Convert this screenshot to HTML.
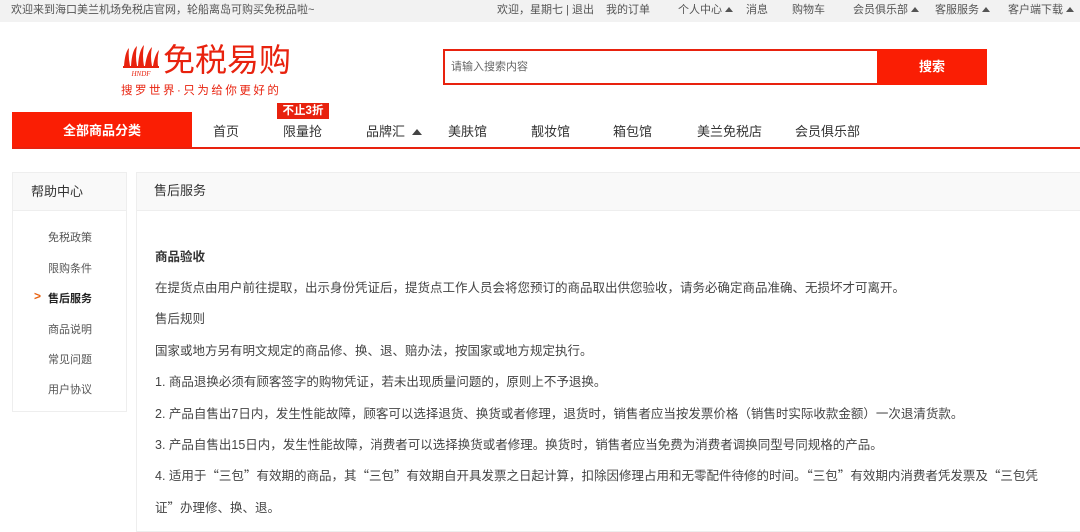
<!DOCTYPE html>
<html><head><meta charset="utf-8"><style>
*{margin:0;padding:0;box-sizing:border-box}
body{width:1080px;height:519px;overflow:hidden;background:#fff;font-family:"Liberation Sans","Noto Sans CJK SC",sans-serif;color:#333;position:relative}
.abs{position:absolute;white-space:nowrap}
.top{position:absolute;left:0;top:0;width:1080px;height:22px;background:#f2f2f2;font-size:11px;color:#555;line-height:20px}
.tri{display:inline-block;width:0;height:0;border-left:4px solid transparent;border-right:4px solid transparent;border-bottom:5px solid #555;margin-left:3px;vertical-align:1px}
.nav{font-size:13px;color:#333;top:121px}
.side{position:absolute;left:12px;top:172px;width:115px;height:240px;border:1px solid #eee}
.sh{height:38px;background:#f9f9f9;border-bottom:1px solid #eee;font-size:13px;line-height:38px;padding-left:18px}
.si{position:absolute;left:35px;font-size:11px;color:#555}
.main{position:absolute;left:136px;top:172px;width:950px;height:360px;border:1px solid #eee}
.mh{height:38px;background:#f9f9f9;border-bottom:1px solid #eee;font-size:13px;line-height:36px;padding-left:17px}
.p{position:absolute;left:18px;font-size:12.5px;color:#444;white-space:nowrap}
.q{font-family:"Noto Sans CJK SC",sans-serif}
</style></head><body>
<div class="top">
<span class="abs" style="left:11px">欢迎来到海口美兰机场免税店官网，轮船离岛可购买免税品啦~</span>
<span class="abs" style="left:497px">欢迎，星期七 | 退出</span>
<span class="abs" style="left:606px">我的订单</span>
<span class="abs" style="left:678px">个人中心<i class="tri"></i></span>
<span class="abs" style="left:746px">消息</span>
<span class="abs" style="left:792px">购物车</span>
<span class="abs" style="left:853px">会员俱乐部<i class="tri"></i></span>
<span class="abs" style="left:935px">客服服务<i class="tri"></i></span>
<span class="abs" style="left:1008px">客户端下载<i class="tri"></i></span>
</div>
<svg class="abs" style="left:121px;top:44px" width="40" height="34" viewBox="0 0 40 34">
<path d="M3 22 Q4 8 8 4 Q7 12 9 22Z M10 22 Q11 6 16 2 Q14 12 16 22Z M17 22 Q18 6 23 1 Q21 12 23 22Z M24 22 Q26 8 31 3 Q29 12 31 22Z M32 22 Q34 10 38 6 Q36 14 37 22Z" fill="#e8220e"/>
<rect x="2" y="22" width="36" height="2" fill="#e8220e"/>
<text x="20" y="32" font-size="7" text-anchor="middle" fill="#e8220e" font-family="Liberation Serif" font-style="italic">HNDF</text>
</svg>
<span class="abs" style="left:163px;top:41px;font-size:32px;color:#e8220e;line-height:38px">免税易购</span>
<span class="abs" style="left:121px;top:82px;font-size:11.5px;color:#e8220e;letter-spacing:2.5px">搜罗世界·只为给你更好的</span>
<div class="abs" style="left:443px;top:49px;width:436px;height:36px;border:2px solid #e8220e;font-size:11px;color:#666;line-height:32px;padding-left:6px">请输入搜索内容</div>
<div class="abs" style="left:877px;top:49px;width:110px;height:36px;background:#fa1e04;color:#fff;font-size:13px;font-weight:bold;text-align:center;line-height:36px">搜索</div>
<div class="abs" style="left:12px;top:112px;width:180px;height:37px;background:#fa1e04;color:#fff;font-size:13px;font-weight:bold;text-align:center;line-height:37px">全部商品分类</div>
<div class="abs" style="left:12px;top:147px;width:1068px;height:2px;background:#e8220e"></div>
<div class="abs" style="left:277px;top:103px;width:52px;height:16px;background:#e8220e;color:#fff;font-size:11.5px;font-weight:bold;text-align:center;line-height:16px">不止3折</div>
<span class="abs nav" style="left:213px">首页</span>
<span class="abs nav" style="left:283px">限量抢</span>
<span class="abs nav" style="left:366px">品牌汇 <i class="tri" style="border-bottom-color:#444;border-left-width:5px;border-right-width:5px;border-bottom-width:6px"></i></span>
<span class="abs nav" style="left:448px">美肤馆</span>
<span class="abs nav" style="left:531px">靓妆馆</span>
<span class="abs nav" style="left:613px">箱包馆</span>
<span class="abs nav" style="left:697px">美兰免税店</span>
<span class="abs nav" style="left:795px">会员俱乐部</span>
<div class="side"><div class="sh">帮助中心</div>
<span class="si" style="top:56px">免税政策</span>
<span class="si" style="top:87px">限购条件</span>
<span class="si" style="top:117px;color:#222;font-weight:bold"><b style="position:absolute;left:-14px;top:-1px;color:#e8600e;font-size:12px">&gt;</b>售后服务</span>
<span class="si" style="top:148px">商品说明</span>
<span class="si" style="top:178px">常见问题</span>
<span class="si" style="top:208px">用户协议</span>
</div>
<div class="main"><div class="mh">售后服务</div>
<span class="p" style="top:73px;font-weight:bold;color:#333">商品验收</span>
<span class="p" style="top:104px">在提货点由用户前往提取，出示身份凭证后，提货点工作人员会将您预订的商品取出供您验收，请务必确定商品准确、无损坏才可离开。</span>
<span class="p" style="top:135px">售后规则</span>
<span class="p" style="top:167px">国家或地方另有明文规定的商品修、换、退、赔办法，按国家或地方规定执行。</span>
<span class="p" style="top:198px">1. 商品退换必须有顾客签字的购物凭证，若未出现质量问题的，原则上不予退换。</span>
<span class="p" style="top:230px">2. 产品自售出7日内，发生性能故障，顾客可以选择退货、换货或者修理，退货时，销售者应当按发票价格（销售时实际收款金额）一次退清货款。</span>
<span class="p" style="top:261px">3. 产品自售出15日内，发生性能故障，消费者可以选择换货或者修理。换货时，销售者应当免费为消费者调换同型号同规格的产品。</span>
<span class="p" style="top:292px">4. 适用于<span class="q">“</span>三包<span class="q">”</span>有效期的商品，其<span class="q">“</span>三包<span class="q">”</span>有效期自开具发票之日起计算，扣除因修理占用和无零配件待修的时间。<span class="q">“</span>三包<span class="q">”</span>有效期内消费者凭发票及<span class="q">“</span>三包凭</span>
<span class="p" style="top:324px">证<span class="q">”</span>办理修、换、退。</span>
</div>
</body></html>
